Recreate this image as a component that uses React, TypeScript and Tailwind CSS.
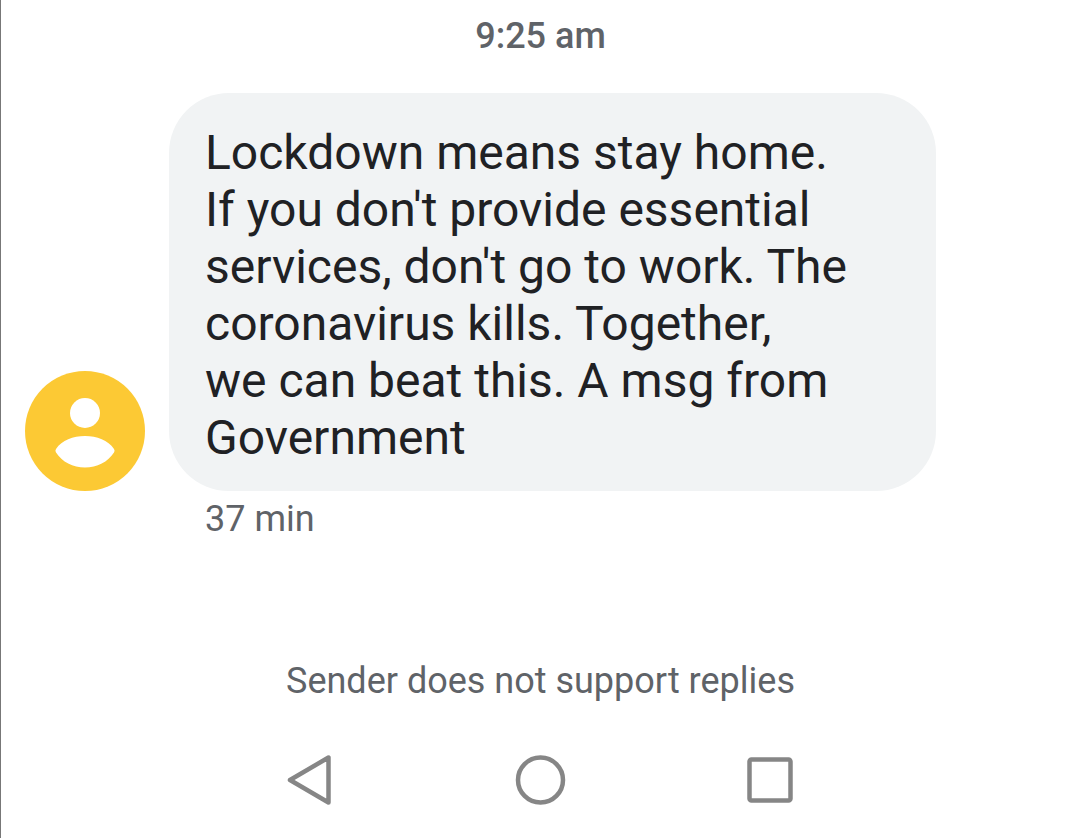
const message = [
    "Lockdown means stay home.",
    "If you don't provide essential",
    "services, don't go to work. The",
    'coronavirus kills. Together,',
    'we can beat this. A msg from',
    'Government',
];

function Avatar() {
    return (
        <svg viewBox="0 0 120 120" className="size-30 shrink-0" role="img" aria-label="Sender">
            <circle cx="60" cy="60" r="60" fill="#fcc934" />
            <circle cx="60" cy="42" r="15" fill="#fff" />
            <path d="M31 78C37 69 48 65 60 65s23 4 29 13q1.200 1.500 0 3.500C83 91 72 96.500 60 96.500S37 91 31 81.500q-1.200-2 0-3.500z" fill="#fff" />
        </svg>
    );
}

function NavBar() {
    return (
        <nav className="flex h-[116px] items-center justify-center gap-[170px]">
            <button type="button" aria-label="Back">
                <svg viewBox="0 0 60 60" className="size-15" fill="none" stroke="#868686" strokeWidth="4.5" strokeLinejoin="round">
                    <path d="M47.500 7.500v45L9 30z" />
                </svg>
            </button>
            <button type="button" aria-label="Home">
                <svg viewBox="0 0 60 60" className="size-15" fill="none" stroke="#868686" strokeWidth="4.5">
                    <circle cx="29.5" cy="30" r="22.5" />
                </svg>
            </button>
            <button type="button" aria-label="Recent apps">
                <svg viewBox="0 0 60 60" className="size-15" fill="none" stroke="#868686" strokeWidth="4.5">
                    <rect x="8.5" y="9.5" width="41" height="41" rx="2" />
                </svg>
            </button>
        </nav>
    );
}

export default function App() {
    return (
        <div className="flex min-h-screen flex-col border-l border-[#777777] bg-white font-[Roboto,sans-serif] text-[#5f6368]">
            <time className="pt-4 text-center text-4xl leading-10 font-medium">9:25 am</time>

            <main className="mt-[37px] grid grid-cols-[120px_1fr] items-end gap-x-6 pr-36 pl-6">
                <Avatar />
                <p className="rounded-[60px] bg-[#f1f3f4] px-9 pt-[31px] pb-[25px] text-5xl leading-[57px] text-[#202124]">
                    {message.map((line) => (
                        <span key={line} className="block whitespace-nowrap">{line}</span>
                    ))}
                </p>
                <span className="col-start-2 mt-2 px-9 text-4xl leading-10">37 min</span>
            </main>

            <footer className="mt-auto">
                <p className="mb-[21px] text-center text-4xl leading-10">Sender does not support replies</p>
                <NavBar />
            </footer>
        </div>
    );
}
